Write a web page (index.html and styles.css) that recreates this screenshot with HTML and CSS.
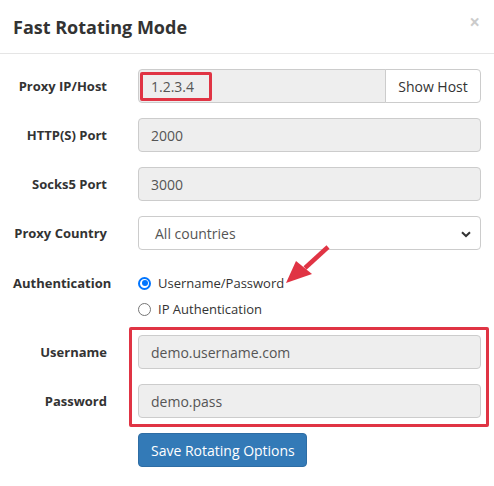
FILE: index.html
```html
<!DOCTYPE html>
<html>
<head>
<meta charset="utf-8">
<link rel="stylesheet" href="styles.css">
</head>
<body>
<div class="modal">
  <div class="modal-header">
    <h4 class="modal-title">Fast Rotating Mode</h4>
    <span class="close">&times;</span>
  </div>
  <div class="modal-body">
    <div class="form-group">
      <label class="label">Proxy IP/Host</label>
      <div class="control input-group">
        <div class="field readonly grow">1.2.3.4<span class="mark-ip"></span></div>
        <button class="btn btn-default">Show Host</button>
      </div>
    </div>
    <div class="form-group">
      <label class="label">HTTP(S) Port</label>
      <div class="control"><div class="field readonly">2000</div></div>
    </div>
    <div class="form-group">
      <label class="label">Socks5 Port</label>
      <div class="control"><div class="field readonly">3000</div></div>
    </div>
    <div class="form-group">
      <label class="label">Proxy Country</label>
      <div class="control">
        <div class="field select">All countries
          <svg class="chev" width="10" height="7" viewBox="0 0 10 7"><path d="M1 1.2 L5 5 L9 1.2" fill="none" stroke="#333" stroke-width="2"/></svg>
        </div>
      </div>
    </div>
    <div class="form-group auth">
      <label class="label">Authentication</label>
      <div class="control radios">
        <label class="radio"><span class="rb checked"></span>Username/Password</label>
        <label class="radio"><span class="rb"></span>IP Authentication</label>
        <svg class="arrow" width="50" height="48" viewBox="0 0 50 48"><path d="M43 7 L20 28" stroke="#e03444" stroke-width="4.5" fill="none"/><path d="M1 43 L11 21 L27 34 Z" fill="#e03444"/></svg>
      </div>
    </div>
    <div class="creds">
      <div class="form-group">
        <label class="label">Username</label>
        <div class="control"><div class="field readonly">demo.username.com</div></div>
      </div>
      <div class="form-group">
        <label class="label">Password</label>
        <div class="control"><div class="field readonly">demo.pass</div></div>
      </div>
      <span class="mark-creds"></span>
    </div>
    <div class="form-group actions">
      <span class="label"></span>
      <div class="control"><button class="btn btn-primary">Save Rotating Options</button></div>
    </div>
  </div>
</div>
</body>
</html>
```
FILE: styles.css
```css
html, body {
  margin: 0;
  padding: 0;
  background: #fff;
}
body {
  font-family: "Open Sans", "Liberation Sans", sans-serif;
  color: #333;
  font-size: 14px;
}
.modal {
  width: 494px;
}
.modal-header {
  position: relative;
  height: 54px;
  border-bottom: 1px solid #e5e5e5;
  padding: 0 13px;
  box-sizing: border-box;
  display: flex;
  align-items: center;
}
.modal-title {
  margin: 0;
  font-size: 18px;
  font-weight: 700;
  color: #333;
}
.close {
  position: absolute;
  right: 14px;
  top: 12px;
  font-size: 19px;
  font-weight: 700;
  line-height: 20px;
  color: #000;
  opacity: .2;
}
.modal-body {
  padding: 15px 13px 0 13px;
}
.form-group {
  display: grid;
  grid-template-columns: 94px 1fr;
  column-gap: 31px;
  align-items: center;
  margin-bottom: 15px;
}
.label {
  font-size: 13px;
  font-weight: 700;
  text-align: right;
  white-space: nowrap;
  color: #333;
}
.control {
  min-width: 0;
  position: relative;
}
.field {
  height: 34px;
  box-sizing: border-box;
  border: 1px solid #ccc;
  border-radius: 4px;
  padding: 0 12px;
  display: flex;
  align-items: center;
  color: #555;
  font-size: 14px;
  position: relative;
}
.readonly {
  background: #eee;
}
.input-group {
  display: flex;
}
.grow {
  flex: 1;
  border-radius: 4px 0 0 4px;
}
.btn {
  font-family: inherit;
  font-size: 14px;
  height: 34px;
  box-sizing: border-box;
  padding: 0 12px;
  border-radius: 4px;
  border: 1px solid #ccc;
  cursor: pointer;
  white-space: nowrap;
}
.btn-default {
  background: #fff;
  color: #333;
  border-radius: 0 4px 4px 0;
  margin-left: -1px;
  width: 96px;
}
.btn-primary {
  background: #337ab7;
  border-color: #2e6da4;
  color: #fff;
  width: 169px;
}
.select {
  background: #fff;
  padding-left: 16px;
}
.chev {
  position: absolute;
  right: 9px;
  top: 14px;
}
.mark-ip {
  position: absolute;
  left: 1px;
  top: 2px;
  width: 72px;
  height: 29px;
  box-sizing: border-box;
  border: 3px solid #e03444;
  border-radius: 2px;
}
.auth {
  align-items: start;
  margin-top: 20px;
  margin-bottom: 5px;
}
.auth .label {
  line-height: 26px;
}
.radios {
  display: flex;
  flex-direction: column;
}
.radio {
  display: flex;
  align-items: center;
  font-size: 13px;
  height: 26px;
  color: #333;
}
.rb {
  width: 13px;
  height: 13px;
  box-sizing: border-box;
  border: 1px solid #767676;
  border-radius: 50%;
  margin-right: 7px;
  position: relative;
  background: #fff;
}
.rb.checked {
  border: 2px solid #0075ff;
}
.rb.checked::after {
  content: "";
  position: absolute;
  left: 1.5px;
  top: 1.5px;
  width: 6px;
  height: 6px;
  border-radius: 50%;
  background: #0075ff;
}
.arrow {
  position: absolute;
  left: 147px;
  top: -30px;
}
.creds {
  position: relative;
  display: flow-root;
  padding-top: 8px;
}
.mark-creds {
  position: absolute;
  left: 116px;
  right: -8px;
  top: 0;
  bottom: 6px;
  border: 3px solid #e03444;
  border-radius: 2px;
}
```
